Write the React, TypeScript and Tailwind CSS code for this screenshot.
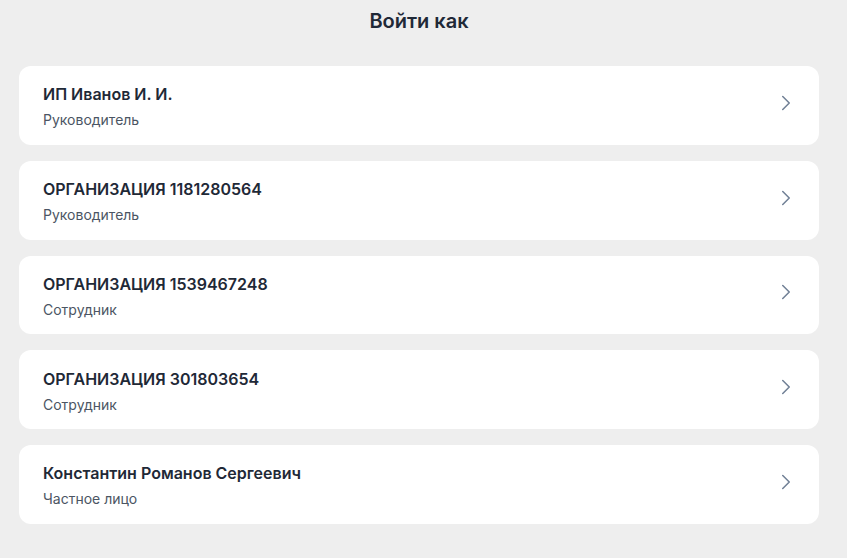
import { ChevronRight } from "lucide-react";

const accounts = [
  { title: "ИП Иванов И. И.", role: "Руководитель" },
  { title: "ОРГАНИЗАЦИЯ 1181280564", role: "Руководитель" },
  { title: "ОРГАНИЗАЦИЯ 1539467248", role: "Сотрудник" },
  { title: "ОРГАНИЗАЦИЯ 301803654", role: "Сотрудник" },
  { title: "Константин Романов Сергеевич", role: "Частное лицо" },
];

export default function App() {
  return (
    <div
      className="min-h-screen bg-[#eeeeee] px-[19px] pb-8"
      style={{ fontFamily: "Inter, 'Noto Sans', sans-serif" }}
    >
      <div className="w-[800px]">
        <h1 className="pt-[7px] text-center text-xl leading-7 font-semibold text-[#1f2937]">
          Войти как
        </h1>

        <div className="mt-[31px] flex flex-col gap-4">
          {accounts.map((a) => (
            <button
              key={a.title}
              className="flex h-[78.75px] items-center justify-between rounded-xl bg-white pl-6 pr-5 text-left"
            >
              <div className="flex flex-col pt-[2px]">
                <span className="text-base leading-6 font-semibold text-[#1f2937]">
                  {a.title}
                </span>
                <span className="mt-1 text-sm leading-5 text-[#4b5563]">
                  {a.role}
                </span>
              </div>
              <ChevronRight className="mb-[5px] h-[26px] w-[26px] text-[#718096]" strokeWidth={1.4} />
            </button>
          ))}
        </div>
      </div>
    </div>
  );
}
